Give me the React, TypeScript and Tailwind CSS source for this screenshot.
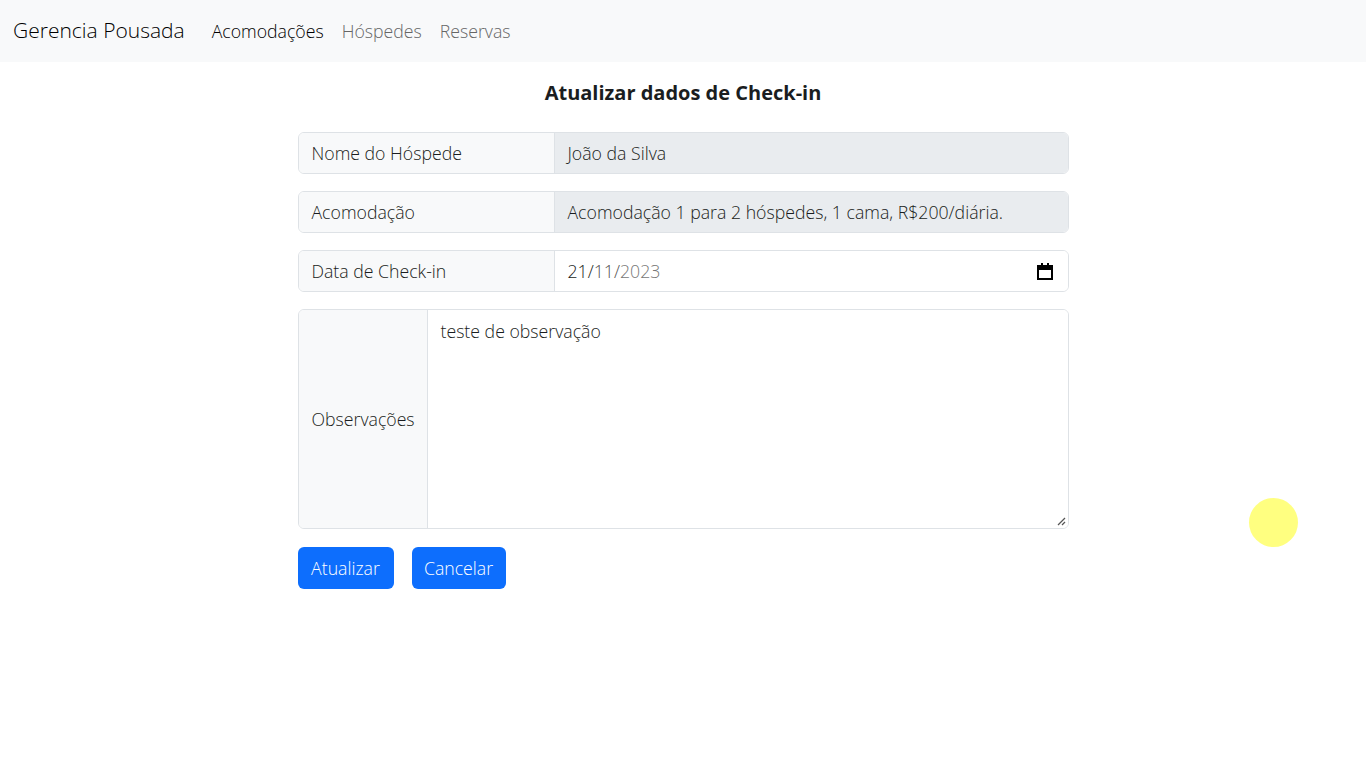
import React from "react";

export default function App() {
  const font = { fontFamily: '"Open Sans", "Noto Sans", sans-serif' };
  return (
    <div className="min-h-screen bg-white text-[#1a1d20] relative" style={font}>
      <nav className="h-[62px] bg-[#f8f9fa] flex items-center px-[13px]">
        <span className="text-[21px] font-light text-black mr-[27px]">Gerencia Pousada</span>
        <div className="flex items-center gap-[18px] text-[17.7px] font-light">
          <span className="text-black">Acomodações</span>
          <span className="text-[#666]">Hóspedes</span>
          <span className="text-[#666]">Reservas</span>
        </div>
      </nav>
      <main className="w-[771px] mx-auto">
        <h1 className="text-[20px] font-bold text-center mt-[16px] mb-[24px] leading-[30px]">Atualizar dados de Check-in</h1>
        <div className="flex flex-col gap-[17px]">
          <div className="flex h-[42px] border border-[#dee2e6] rounded-[6px] overflow-hidden font-light text-[17.7px]">
            <div className="w-[256px] bg-[#f8f9fa] border-r border-[#dee2e6] flex items-center px-[13px]">Nome do Hóspede</div>
            <div className="flex-1 bg-[#e9ecef] flex items-center px-[13px]">João da Silva</div>
          </div>
          <div className="flex h-[42px] border border-[#dee2e6] rounded-[6px] overflow-hidden font-light text-[17.7px]">
            <div className="w-[256px] bg-[#f8f9fa] border-r border-[#dee2e6] flex items-center px-[13px]">Acomodação</div>
            <div className="flex-1 bg-[#e9ecef] flex items-center px-[13px]">Acomodação 1 para 2 hóspedes, 1 cama, R$200/diária.</div>
          </div>
          <div className="flex h-[42px] border border-[#dee2e6] rounded-[6px] overflow-hidden font-light text-[17.7px]">
            <div className="w-[256px] bg-[#f8f9fa] border-r border-[#dee2e6] flex items-center px-[13px]">Data de Check-in</div>
            <div className="flex-1 bg-white flex items-center px-[13px]">
              <span>21/</span>
              <span className="text-[#555]">11/</span>
              <span className="text-[#777]">2023</span>
              <svg className="ml-auto mr-[2px]" width="16" height="17" viewBox="0 0 16 17">
                <rect x="1" y="3" width="14" height="13" fill="none" stroke="#000" strokeWidth="2" />
                <rect x="1" y="3" width="14" height="4" fill="#000" />
                <rect x="4" y="0" width="2" height="4" fill="#000" />
                <rect x="10" y="0" width="2" height="4" fill="#000" />
              </svg>
            </div>
          </div>
          <div className="flex h-[220px] border border-[#dee2e6] rounded-[6px] overflow-hidden font-light text-[17.7px] relative">
            <div className="w-[129px] bg-[#f8f9fa] border-r border-[#dee2e6] flex items-center px-[13px]">Observações</div>
            <div className="flex-1 bg-white px-[13px] pt-[8px]">teste de observação</div>
            <svg className="absolute right-[2px] bottom-[2px]" width="9" height="9" viewBox="0 0 9 9">
              <line x1="8" y1="1" x2="1" y2="8" stroke="#555" strokeWidth="1.2" />
              <line x1="8" y1="5" x2="5" y2="8" stroke="#555" strokeWidth="1.2" />
            </svg>
          </div>
        </div>
        <div className="flex gap-[18px] mt-[18px] font-light text-[17.7px]">
          <button className="h-[42px] w-[96px] bg-[#0d6efd] text-white rounded-[6px]">Atualizar</button>
          <button className="h-[42px] w-[94px] bg-[#0d6efd] text-white rounded-[6px]">Cancelar</button>
        </div>
      </main>
      <div className="absolute left-[1249px] top-[498px] w-[49px] h-[49px] rounded-full bg-[#ffff80]" />
    </div>
  );
}
